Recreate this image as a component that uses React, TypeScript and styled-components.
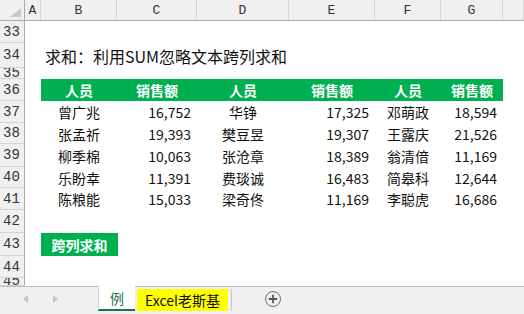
import React from "react";
import styled, { createGlobalStyle, css } from "styled-components";

const COLS = "25px 16px 76px 80px 92px 86px 66px 62px 1fr";
const GREEN = "#00b050";
const CJK = `"Noto Sans CJK SC", "Noto Sans", sans-serif`;

const rows: [string, string, string, string, string, string][] = [
  ["曾广兆", "16,752", "华铮", "17,325", "邓萌政", "18,594"],
  ["张孟祈", "19,393", "樊豆昱", "19,307", "王露庆", "21,526"],
  ["柳季棉", "10,063", "张沧章", "18,389", "翁清偣", "11,169"],
  ["乐盼幸", "11,391", "费琰诚", "16,483", "简皋科", "12,644"],
  ["陈粮能", "15,033", "梁奇佟", "11,169", "李聪虎", "16,686"],
];
const dataHeights = [22, 22, 21, 23, 21, 22];

const App = () => {
  return (
    <Window>
      <GlobalStyle />
      <Sheet>
        <GridRow $h={21}>
          <Corner>
            <svg width="11" height="9" viewBox="0 0 11 9">
              <polygon points="11,0 11,9 0,9" fill="#c9c9c9" />
            </svg>
          </Corner>
          {["A", "B", "C", "D", "E", "F", "G", ""].map((c, i) => (
            <ColHead key={i}>{c}</ColHead>
          ))}
        </GridRow>

        <GridRow $h={22}>
          <RowHead>33</RowHead>
        </GridRow>

        <GridRow $h={25}>
          <RowHead>34</RowHead>
          <Cell />
          <Title>求和：利用SUM忽略文本跨列求和</Title>
        </GridRow>

        <GridRow $h={11}>
          <RowHead $clip={11}>35</RowHead>
        </GridRow>

        <GridRow $h={dataHeights[0]}>
          <RowHead>36</RowHead>
          <Cell />
          {["人员", "销售额", "人员", "销售额", "人员", "销售额"].map((t, i) => (
            <HeadCell key={i}>{t}</HeadCell>
          ))}
        </GridRow>

        {rows.map((r, i) => (
          <GridRow key={i} $h={dataHeights[i + 1]}>
            <RowHead>{37 + i}</RowHead>
            <Cell />
            {r.map((v, j) => (
              <Cell key={j} $align={j % 2 ? "right" : "center"}>
                {v}
              </Cell>
            ))}
          </GridRow>
        ))}

        <GridRow $h={23}>
          <RowHead>42</RowHead>
        </GridRow>
        <GridRow $h={23}>
          <RowHead>43</RowHead>
          <Cell />
          <ButtonCell>跨列求和</ButtonCell>
        </GridRow>
        <GridRow $h={22}>
          <RowHead>44</RowHead>
        </GridRow>
        <GridRow $h={8}>
          <RowHead $clip={8}>45</RowHead>
        </GridRow>
      </Sheet>

      <TabBar>
        <Nav>
          <svg width="6" height="8" viewBox="0 0 6 8">
            <polygon points="5,0 5,8 0,4" fill="#c4c4c4" />
          </svg>
          <svg width="6" height="8" viewBox="0 0 6 8">
            <polygon points="1,0 1,8 6,4" fill="#c4c4c4" />
          </svg>
        </Nav>
        <Tab $active>例</Tab>
        <Tab $yellow>Excel老斯基</Tab>
        <Divider />
        <AddButton>
          <svg width="18" height="18" viewBox="0 0 18 18">
            <circle cx="9" cy="9" r="7.5" fill="none" stroke="#6e6e6e" strokeWidth="1" />
            <path d="M9 4.8v8.4M4.8 9h8.4" stroke="#555" strokeWidth="1.8" />
          </svg>
        </AddButton>
      </TabBar>
    </Window>
  );
};

export default App;

const GlobalStyle = createGlobalStyle`
  html, body {
    margin: 0;
    padding: 0;
    background: #fff;
  }
  body {
    font-family: ${CJK};
  }
`;

const Window = styled.div`
  width: 524px;
  height: 314px;
  display: flex;
  flex-direction: column;
  overflow: hidden;
  background: #fff;
`;

const Sheet = styled.div`
  height: 286px;
  display: flex;
  flex-direction: column;
  overflow: hidden;
`;

const GridRow = styled.div<{ $h: number }>`
  display: grid;
  grid-template-columns: ${COLS};
  height: ${(p) => p.$h}px;
  flex: none;
`;

const headBase = css`
  background: #f0f0f0;
  color: #333;
  font-family: "Liberation Mono", "DejaVu Sans Mono", monospace;
  font-size: 13px;
  box-sizing: border-box;
  display: flex;
  align-items: center;
  justify-content: center;
  overflow: hidden;
`;

const Corner = styled.div`
  ${headBase};
  border-right: 1px solid #ababab;
  border-bottom: 1px solid #ababab;
  align-items: flex-end;
  justify-content: flex-end;
  padding: 0 3px 3px 0;
`;

const ColHead = styled.div`
  ${headBase};
  border-right: 1px solid #d4d4d4;
  border-bottom: 1px solid #ababab;
`;

const RowHead = styled.div<{ $clip?: number }>`
  ${headBase};
  border-right: 1px solid #ababab;
  border-bottom: 1px solid #d4d4d4;
  justify-content: flex-start;
  padding-left: 3px;
  font-size: 14px;
  ${(p) =>
    p.$clip &&
    css`
      align-items: flex-start;
      line-height: ${p.$clip - 1}px;
    `}
`;

const Cell = styled.div<{ $align?: "center" | "right" }>`
  display: flex;
  align-items: center;
  justify-content: ${(p) => (p.$align === "right" ? "flex-end" : "center")};
  padding-right: ${(p) => (p.$align === "right" ? "6px" : "0")};
  font-size: 14px;
  color: #111;
  white-space: nowrap;
`;

const HeadCell = styled.div`
  display: flex;
  align-items: center;
  justify-content: center;
  background: ${GREEN};
  color: #fff;
  font-weight: bold;
  font-size: 14px;
`;

const Title = styled.div`
  grid-column: 3 / span 6;
  display: flex;
  align-items: center;
  padding-left: 4px;
  font-size: 16px;
  color: #111;
  white-space: nowrap;
`;

const ButtonCell = styled(HeadCell)`
  margin-right: -1px;
`;

const TabBar = styled.div`
  height: 28px;
  box-sizing: border-box;
  border-top: 1px solid #bdbdbd;
  background: #f0f0f0;
  display: flex;
  align-items: flex-start;
  font-family: ${CJK};
`;

const Nav = styled.div`
  width: 98px;
  height: 24px;
  display: flex;
  align-items: center;
  gap: 23px;
  padding-left: 23px;
  box-sizing: border-box;
`;

const Tab = styled.div<{ $active?: boolean; $yellow?: boolean }>`
  display: flex;
  align-items: center;
  justify-content: center;
  box-sizing: border-box;
  font-size: 14px;
  ${(p) =>
    p.$active &&
    css`
      width: 37px;
      height: 25px;
      margin-top: -1px;
      background: #fff;
      color: #217346;
      border-bottom: 2px solid #217346;
      border-left: 1px solid #d4d4d4;
    `}
  ${(p) =>
    p.$yellow &&
    css`
      width: 91px;
      height: 22px;
      margin: 2px 0 0 2px;
      background: #ffff00;
      color: #111;
    `}
`;

const Divider = styled.div`
  width: 1px;
  height: 22px;
  margin: 2px 0 0 3px;
  background: #c6c6c6;
`;

const AddButton = styled.div`
  margin: 3px 0 0 32px;
  width: 18px;
  height: 18px;
  display: flex;
`;
